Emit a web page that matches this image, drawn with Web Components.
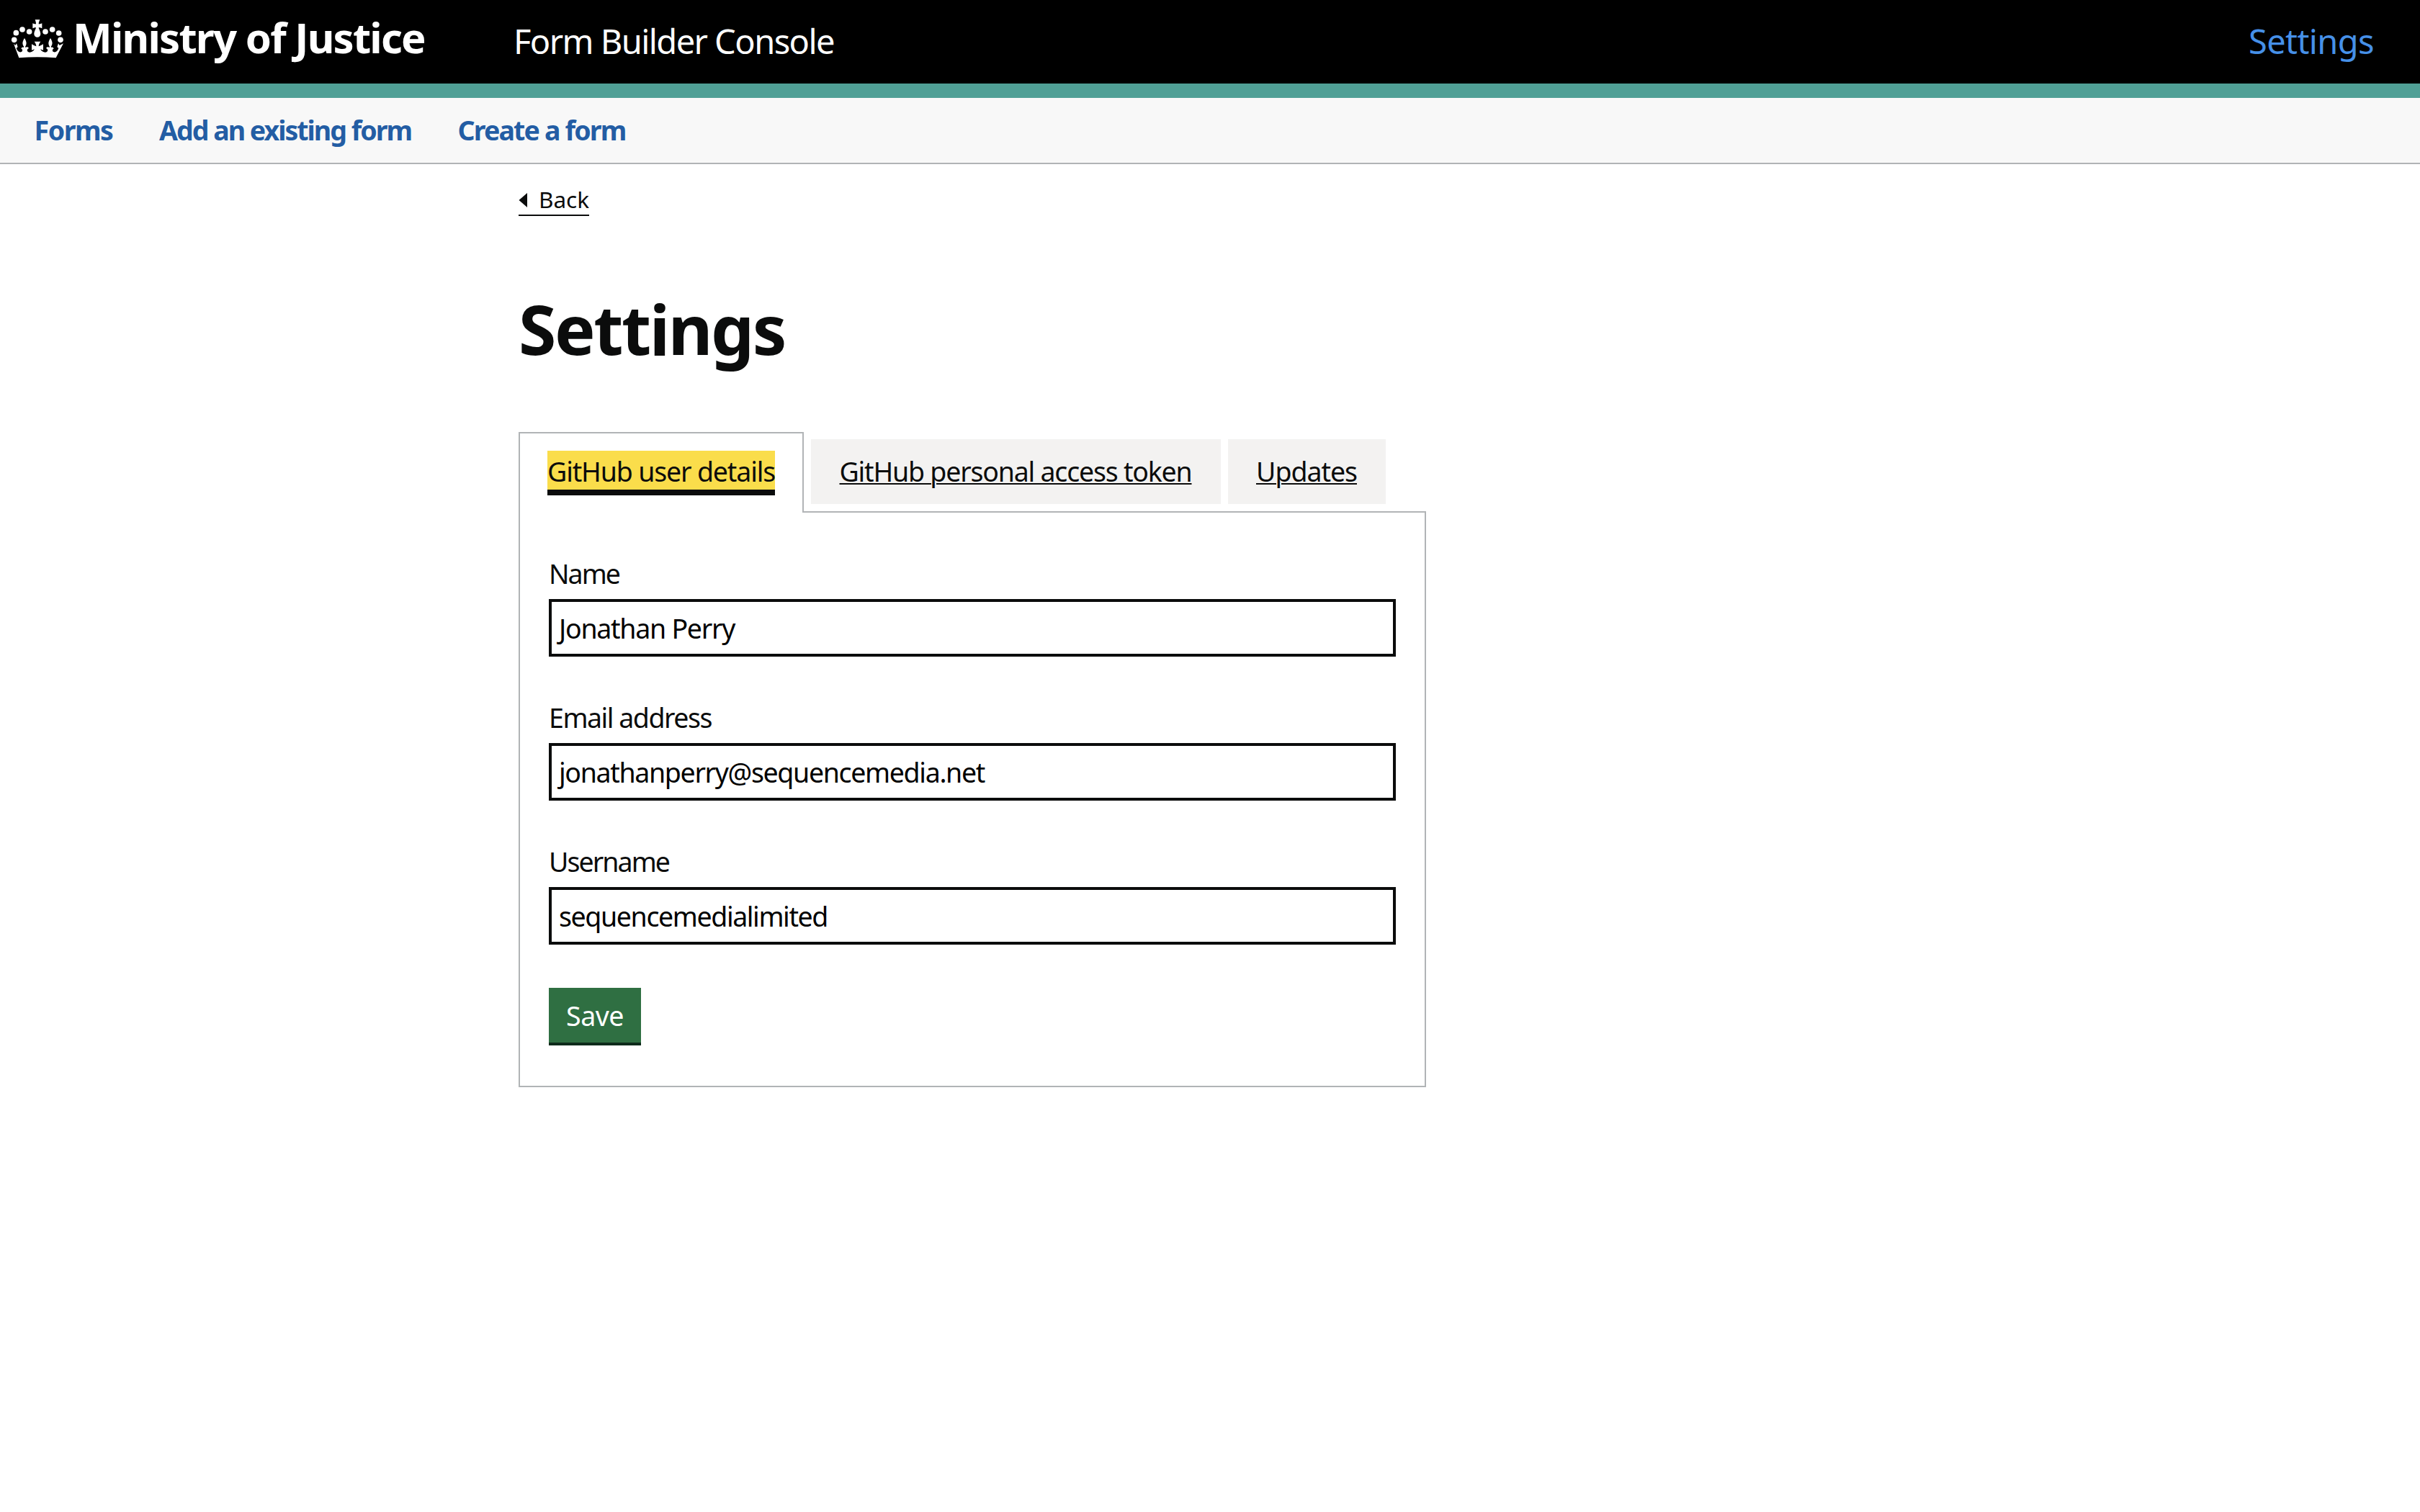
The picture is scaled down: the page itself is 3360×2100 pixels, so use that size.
<!DOCTYPE html>
<html lang="en">
<head>
<meta charset="utf-8">
<title>Settings - Form Builder Console</title>
<style>
  body { margin: 0; background: #fff; color: #0b0c0c; font-family: "Noto Sans", "Liberation Sans", sans-serif; font-size: 37.5px; }
</style>
</head>
<body>
<console-header></console-header>
<console-nav>
  <nav-link w="109">Forms</nav-link>
  <nav-link w="350">Add an existing form</nav-link>
  <nav-link w="233">Create a form</nav-link>
</console-nav>
<console-main>
  <back-link></back-link>
  <page-title w="370">Settings</page-title>
  <tab-set>
    <tab-item slot="tab" selected w="316">GitHub user details</tab-item>
    <tab-item slot="tab" w="489">GitHub personal access token</tab-item>
    <tab-item slot="tab" w="140">Updates</tab-item>
    <text-field label="Name" label-w="98" value="Jonathan Perry" w="244"></text-field>
    <text-field label="Email address" label-w="226" value="jonathanperry@sequencemedia.net" w="591"></text-field>
    <text-field label="Username" label-w="167" value="sequencemedialimited" w="373"></text-field>
    <save-button></save-button>
  </tab-set>
</console-main>
<script>
// Base class: renders html() into an open shadow root.
class Base extends HTMLElement {
  connectedCallback() {
    if (this.shadowRoot) return;
    this.attachShadow({ mode: 'open' }).innerHTML = this.html();
  }
  a(n) { return this.getAttribute(n) || ''; }
}

// A single line of text tracked to a fixed measure.
customElements.define('set-text', class extends HTMLElement {
  connectedCallback() {
    if (this.shadowRoot) return;
    this.attachShadow({ mode: 'open' }).innerHTML =
      `<style>:host{display:inline-block;white-space:nowrap;flex:none}span{display:inline-block;text-decoration:inherit}</style><span><slot></slot></span>`;
    const span = this.shadowRoot.querySelector('span');
    const w = +this.getAttribute('w');
    const n = [...this.textContent].length;
    const natural = span.getBoundingClientRect().width;
    span.style.letterSpacing = ((w - natural) / n).toFixed(3) + 'px';
    this.style.width = w + 'px';
  }
});

customElements.define('crown-logo', class extends Base {
  html() { return `<style>:host{display:block;width:72px;height:54px}svg{display:block}</style>
  <svg width="72" height="54" viewBox="48 50 216 162" fill="#fff">
    <circle cx="59" cy="135" r="11.5"/><circle cx="67" cy="106" r="11.5"/><circle cx="93" cy="92" r="11.5"/><circle cx="122" cy="101" r="11.5"/>
    <circle cx="189" cy="101" r="11.5"/><circle cx="218" cy="92" r="11.5"/><circle cx="245" cy="107" r="11.5"/><circle cx="252" cy="135" r="11.5"/>
    <path d="M146 51h20c-2 6-5 11-5 18 5 1 9-1 14-3v21c-5-2-9-4-14-3 0 5 8 16 8 27a13.500 13.500 0 0 1-27 0c0-11 8-22 8-27-5-1-9 1-14 3v-21c5 2 9 4 14 3 0-7-2-12-4-18z"/>
    <path d="M57 151L64 158L69 150L74 165L68 169C72 183 82 189 89 185C95 182 95 174 88 172C90 166 97 163 98 167L100 164C93 154 91 146 102 128C113 146 111 154 105 164L107 167C110 163 118 165 120 170C111 174 112 181 117 185C124 190 137 186 144 174L132 178V153C138 157 145 160 151 162C151 155 148 149 143 142H169C164 149 161 155 161 162C167 160 174 157 180 153V178L168 174C175 186 188 190 195 185C200 181 201 174 192 170C194 165 202 163 205 167L207 164C201 154 199 146 210 128C221 146 219 154 212 164L214 167C215 163 222 166 224 172C217 174 217 182 223 185C230 189 240 183 244 169L238 165L243 150L248 158L264 150L233 210Q155 203 79 210Z"/>
  </svg>`; }
});

customElements.define('console-header', class extends Base {
  html() { return `<style>
    :host{display:flex;height:116px;background:#000;border-bottom:20px solid #50a096;color:#fff;box-sizing:content-box}
    crown-logo{margin:27px 0 0 16px}
    .org{font-weight:700;font-size:58px;line-height:80px;margin:11.500px 0 0 13px}
    .svc{font-size:47px;line-height:70px;margin:22px 0 0 123px}
    .set{font-size:47px;line-height:70px;margin:22px 64px 0 auto;color:#4690e8}
  </style>
  <crown-logo></crown-logo>
  <set-text class="org" w="489">Ministry of Justice</set-text>
  <set-text class="svc" w="445">Form Builder Console</set-text>
  <set-text class="set" w="174">Settings</set-text>`; }
});

customElements.define('console-nav', class extends Base {
  html() { return `<style>:host{display:flex;height:90px;background:#f8f8f8;border-bottom:2px solid #b1b4b6;padding-left:47.500px;gap:64.500px;line-height:89px;font-weight:700;color:#235da4}</style><slot></slot>`; }
});
customElements.define('nav-link', class extends Base {
  html() { return `<style>:host{display:block}</style><set-text w="${this.a('w')}">${this.textContent}</set-text>`; }
});

customElements.define('console-main', class extends Base {
  html() { return `<style>:host{display:flex;flex-direction:column;align-items:flex-start;width:1260px;margin-left:720px}</style><slot></slot>`; }
});

customElements.define('back-link', class extends Base {
  html() { return `<style>
    :host{display:flex;align-items:center;width:98px;height:44px;margin-top:26px;border-bottom:2px solid #0b0c0c;font-size:31.500px;line-height:44px}
    svg{margin:4px 16px 0 0;flex:none}
    set-text{margin-top:2px}
  </style><svg width="12" height="20" viewBox="0 0 12 20"><path d="M0.500 10L12 0V20z" fill="#0b0c0c"/></svg><set-text w="70">Back</set-text>`; }
});

customElements.define('page-title', class extends Base {
  html() { return `<style>:host{display:block;margin-top:96px;height:204px}h1{margin:0;font-size:95px;line-height:120px;font-weight:700}</style>
  <h1><set-text w="${this.a('w')}">${this.textContent}</set-text></h1>`; }
});

customElements.define('tab-set', class extends Base {
  html() { return `<style>
    :host{display:block;width:1260px}
    .tabs{display:flex;gap:10px;height:110px}
    .panel{box-sizing:border-box;height:800px;border:2px solid #b1b4b6;padding:60px 40px 0}
  </style><div class="tabs"><slot name="tab"></slot></div><div class="panel"><slot></slot></div>`; }
});

customElements.define('tab-item', class extends Base {
  html() { return `<style>
    :host{display:block;box-sizing:border-box;height:90px;margin-top:10px;padding:20px 40px 0 39.500px;background:#f3f2f1;line-height:50px}
    set-text{text-decoration:underline;text-decoration-thickness:2px;text-underline-offset:2px}
    :host([selected]){height:112px;margin-top:0;padding:24px 38px 0;background:#fff;border:2px solid #b1b4b6;border-bottom:0;position:relative}
    :host([selected]) set-text{text-decoration:none;background:#fadd4b;height:54px;line-height:58px;border-bottom:8px solid #0b0c0c}
  </style><set-text w="${this.a('w')}">${this.textContent}</set-text>`; }
});

customElements.define('text-field', class extends Base {
  html() { return `<style>
    :host{display:block;height:200px}
    .label{height:60px;line-height:50px}
    .box{box-sizing:border-box;height:80px;border:4px solid #0b0c0c;padding-left:10px;line-height:74px;color:#000}
  </style><div class="label"><set-text w="${this.a('label-w')}">${this.a('label')}</set-text></div>
  <div class="box" role="textbox"><set-text w="${this.a('w')}">${this.a('value')}</set-text></div>`; }
});

customElements.define('save-button', class extends Base {
  html() { return `<style>
    :host{display:block}
    button{display:flex;justify-content:center;margin:0;padding:0;border:0;width:128px;height:76px;background:#2f6f42;color:#fff;font:inherit;line-height:78px;box-shadow:0 4px 0 #0e2b1b}
  </style><button type="button"><set-text w="80">Save</set-text></button>`; }
});
</script>
</body>
</html>
